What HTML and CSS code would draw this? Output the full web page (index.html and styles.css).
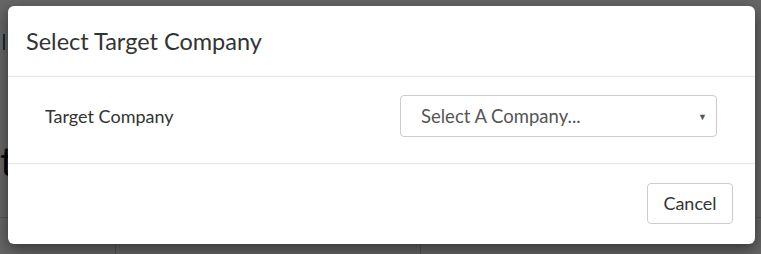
FILE: index.html
```html
<!DOCTYPE html>
<html>
<head>
<meta charset="utf-8">
<link rel="stylesheet" href="styles.css">
</head>
<body>
<div class="page">
  <div class="page-top"><span class="teal-bar"></span></div>
  <div class="page-heading">t</div>
  <div class="page-row">
    <div class="cell cell-a">las Co</div>
    <div class="cell cell-b">Al</div>
    <div class="cell cell-c"></div>
  </div>
</div>
<div class="backdrop"></div>
<div class="modal-wrap">
  <div class="modal">
    <div class="modal-header">
      <h4 class="modal-title">Select Target Company</h4>
    </div>
    <div class="modal-body">
      <label class="field-label">Target Company</label>
      <div class="select">
        <span class="select-text">Select A Company...</span>
        <span class="select-arrow">&#9660;</span>
      </div>
    </div>
    <div class="modal-footer">
      <button class="btn">Cancel</button>
    </div>
  </div>
</div>
</body>
</html>
```
FILE: styles.css
```css
html, body {
  margin: 0;
  padding: 0;
  width: 761px;
  height: 254px;
  overflow: hidden;
  font-family: Lato, "Open Sans", sans-serif;
}
body {
  position: relative;
  background: #fff;
}
.page {
  height: 254px;
  display: flex;
  flex-direction: column;
}
.page-top {
  height: 60px;
  padding-top: 34px;
  box-sizing: border-box;
}
.teal-bar {
  display: block;
  margin-left: 3px;
  width: 2px;
  height: 16px;
  background: #1a7d8c;
}
.page-heading {
  font-size: 40px;
  line-height: 1;
  color: #111;
  margin-top: 84px;
  margin-left: 0;
  height: 84px;
}
.page-row {
  display: flex;
  border-top: 1px solid #ddd;
  flex: 1;
}
.cell {
  font-size: 20px;
  color: #222;
  padding: 6px 20px;
}
.cell-a { width: 75px; border-right: 1px solid #ccc; }
.cell-b { width: 264px; border-right: 1px solid #ccc; }
.backdrop {
  position: absolute;
  inset: 0;
  background: rgba(0, 0, 0, 0.6);
}
.modal-wrap {
  position: absolute;
  inset: 0;
  padding: 6px 6px 0 8px;
}
.modal {
  width: 747px;
  height: 238px;
  background: #fff;
  border-radius: 6px;
  box-shadow: 0 5px 15px rgba(0, 0, 0, 0.5);
  display: flex;
  flex-direction: column;
}
.modal-header {
  height: 71px;
  box-sizing: border-box;
  border-bottom: 1px solid #e5e5e5;
  padding: 0 18px;
  display: flex;
  align-items: center;
}
.modal-title {
  margin: 0;
  font-size: 23.5px;
  font-weight: 400;
  color: #333;
}
.modal-body {
  height: 87px;
  box-sizing: border-box;
  border-bottom: 1px solid #e5e5e5;
  padding: 18px 38px 0 37px;
  display: flex;
  align-items: flex-start;
}
.field-label {
  width: 355px;
  font-size: 18px;
  color: #333;
  line-height: 42px;
}
.select {
  width: 317px;
  height: 42px;
  box-sizing: border-box;
  border: 1px solid #ccc;
  border-radius: 4px;
  display: flex;
  align-items: center;
  padding: 0 9px 0 20px;
}
.select-text {
  flex: 1;
  font-size: 18.5px;
  color: #555;
}
.select-arrow {
  font-size: 9px;
  color: #555;
}
.modal-footer {
  flex: 1;
  display: flex;
  justify-content: flex-end;
  align-items: flex-start;
  padding: 19px 22px 0 0;
}
.btn {
  width: 86px;
  height: 41px;
  padding: 0 0 2px;
  background: #fff;
  border: 1px solid #ccc;
  border-radius: 4px;
  font-family: inherit;
  font-size: 18px;
  color: #333;
}
```
